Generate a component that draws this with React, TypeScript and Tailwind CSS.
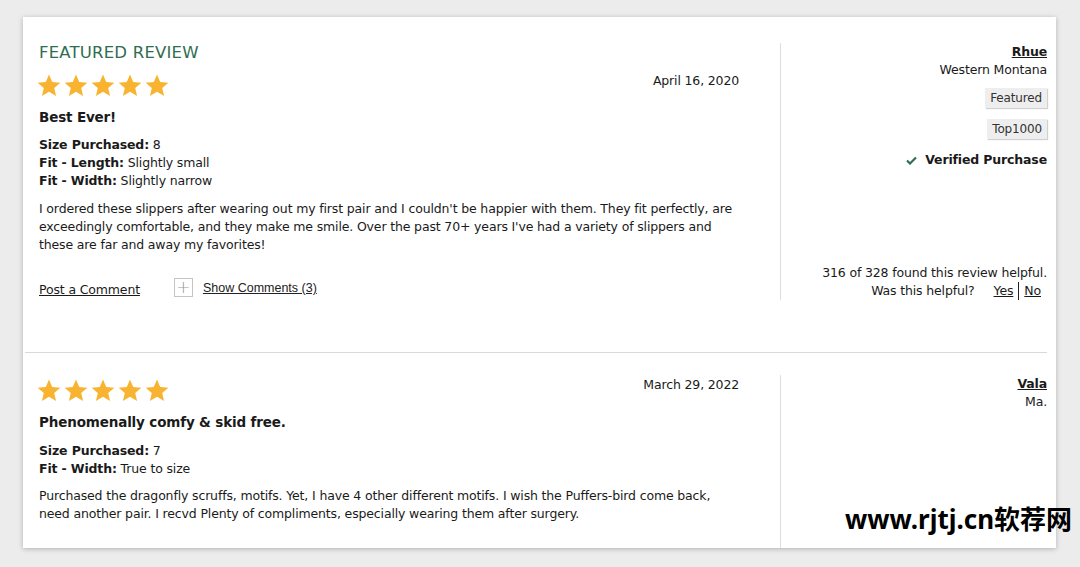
import React from "react";

const font = { fontFamily: '"DejaVu Sans", "Noto Sans", sans-serif' };

function Stars() {
  return (
    <div className="flex gap-[1px]">
      {[0, 1, 2, 3, 4].map((i) => (
        <svg key={i} width="26" height="25" viewBox="0 0 24 24">
          <path
            d="M12 1.5l3.1 7.2 7.8.6-5.9 5.1 1.8 7.6L12 18l-6.8 4 1.8-7.6-5.9-5.1 7.8-.6z"
            fill="#f8b431"
          />
        </svg>
      ))}
    </div>
  );
}

function Badge({ children }: { children: React.ReactNode }) {
  return (
    <span className="inline-block bg-[#eeeeee] px-[5px] py-[3px] text-[12px] leading-[14px] text-[#333] shadow-[1px_1px_1px_rgba(0,0,0,0.18)]">
      {children}
    </span>
  );
}

export default function App() {
  return (
    <div className="relative min-h-[567px] w-[1080px] bg-[#ececec] pt-[17px] pl-[23px] tracking-[-0.15px]" style={font}>
      <div className="w-[1033px] h-[531px] overflow-hidden bg-white shadow-[0_1px_5px_rgba(0,0,0,0.25)] text-[#1a1a1a]">
        {/* Review 1 */}
        <div className="pt-[26px] pb-[52px] flex">
          <div className="flex-1 border-r border-[#dddddd] pl-[16px] pr-[41px]">
            <p className="text-[16.5px] leading-[20px] text-[#2f6e50] tracking-[0.2px]">FEATURED REVIEW</p>
            <div className="flex justify-between items-start mt-[10px] -ml-[3px]">
              <Stars />
              <span className="text-[12.5px] -mt-[1px]">April 16, 2020</span>
            </div>
            <p className="mt-[9px] text-[13.5px] font-bold leading-[20px]">Best Ever!</p>
            <div className="mt-[9px] text-[12.5px] leading-[18px]">
              <p><b>Size Purchased:</b> 8</p>
              <p><b>Fit - Length:</b> Slightly small</p>
              <p><b>Fit - Width:</b> Slightly narrow</p>
            </div>
            <p className="mt-[10px] text-[12.5px] leading-[18px]">
              I ordered these slippers after wearing out my first pair and I couldn't be happier with them. They fit
              perfectly, are exceedingly comfortable, and they make me smile. Over the past 70+ years I've had a variety
              of slippers and these are far and away my favorites!
            </p>
            <div className="mt-[22px] flex items-center">
              <a className="text-[12.5px] underline mt-[5px]">Post a Comment</a>
              <span className="ml-[34px] w-[19px] h-[19px] border border-[#c4c4c4] flex items-center justify-center text-[#999] text-[17px] leading-none font-light">
                +
              </span>
              <a
                className="ml-[10px] text-[12.5px] underline text-[#222] tracking-normal"
                style={{ fontFamily: '"Liberation Sans", Arial, sans-serif' }}
              >
                Show Comments (3)
              </a>
            </div>
          </div>
          <div className="w-[275px] pr-[9px] flex flex-col items-end text-[12.5px] leading-[18px]">
            <a className="font-bold underline">Rhue</a>
            <p>Western Montana</p>
            <div className="mt-[9px]"><Badge>Featured</Badge></div>
            <div className="mt-[11px]"><Badge>Top1000</Badge></div>
            <div className="mt-[12px] flex items-center gap-[8px] font-bold">
              <svg width="11" height="9" viewBox="0 0 11 9">
                <path d="M1 4.5l3 3L10 1.5" stroke="#2f6e50" strokeWidth="2.2" fill="none" />
              </svg>
              Verified Purchase
            </div>
            <div className="flex-1" />
            <p>316 of 328 found this review helpful.</p>
            <div className="flex items-center">
              <span>Was this helpful?</span>
              <a className="ml-[19px] underline">Yes</a>
              <span className="mx-[5px] w-[1px] h-[18px] bg-[#222]" />
              <a className="underline mr-[6px]">No</a>
            </div>
          </div>
        </div>

        <div className="ml-[2px] mr-[9px] border-t border-[#d9d9d9]" />

        {/* Review 2 */}
        <div className="pt-[22px] flex h-[200px]">
          <div className="flex-1 border-r border-[#dddddd] pl-[16px] pr-[41px]">
            <div className="flex justify-between items-start mt-[3px] -ml-[3px]">
              <Stars />
              <span className="text-[12.5px] -mt-[2px]">March 29, 2022</span>
            </div>
            <p className="mt-[9px] text-[13.5px] font-bold leading-[20px]">Phenomenally comfy &amp; skid free.</p>
            <div className="mt-[10px] text-[12.5px] leading-[18px]">
              <p><b>Size Purchased:</b> 7</p>
              <p><b>Fit - Width:</b> True to size</p>
            </div>
            <p className="mt-[9px] text-[12.5px] leading-[18px]">
              Purchased the dragonfly scruffs, motifs. Yet, I have 4 other different motifs. I wish the Puffers-bird come
              back, need another pair. I recvd Plenty of compliments, especially wearing them after surgery.
            </p>
          </div>
          <div className="w-[275px] pr-[9px] flex flex-col items-end text-[12.5px] leading-[18px]">
            <a className="font-bold underline">Vala</a>
            <p>Ma.</p>
          </div>
        </div>
      </div>

      <div
        className="absolute left-[845px] top-[502px] text-[26px] font-bold text-black leading-[34px] tracking-normal"
        style={{ fontFamily: '"Noto Sans", "Noto Sans CJK SC", sans-serif' }}
      >
        www.rjtj.cn软荐网
      </div>
    </div>
  );
}
